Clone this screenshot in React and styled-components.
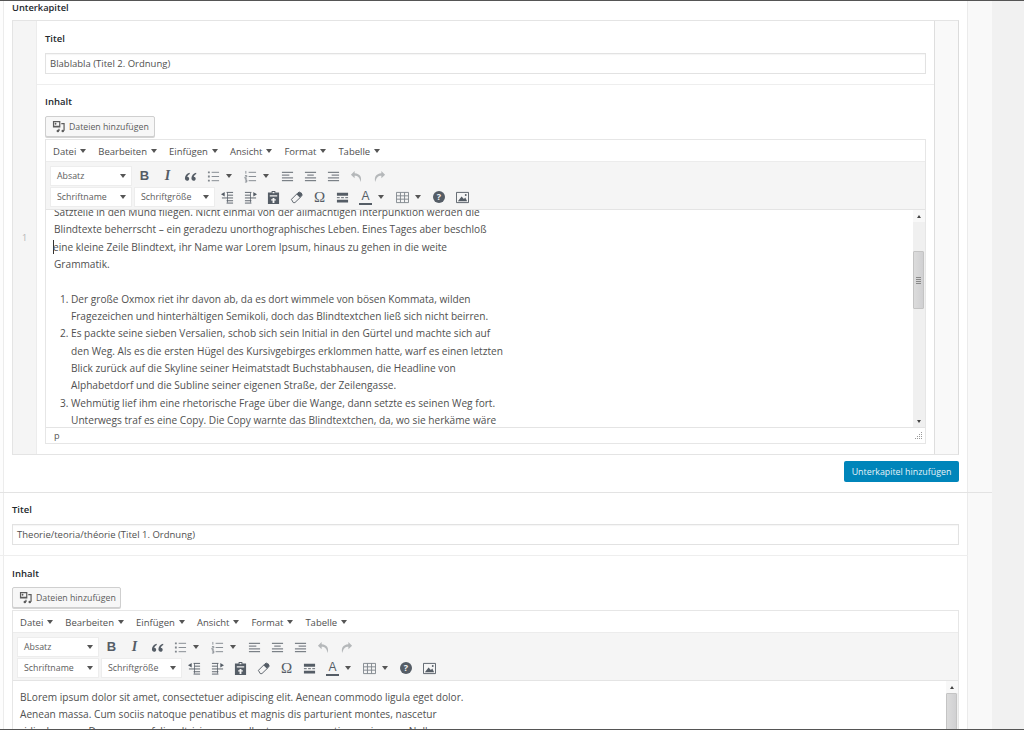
import styled, { createGlobalStyle } from "styled-components";

const GlobalStyle = createGlobalStyle`
  html, body {
    margin: 0;
    padding: 0;
    background: #f1f1f1;
    overflow: hidden;
  }
  body {
    font-family: "Open Sans", "Liberation Sans", sans-serif;
    color: #444;
  }
  * {
    box-sizing: border-box;
  }
`;

const Page = styled.div`
  height: 730px;
  overflow: hidden;
  border-top: 1px solid #555;
  border-bottom: 1px solid #555;
`;

const Sheet = styled.div`
  width: 992px;
  min-height: 730px;
  background: linear-gradient(
    to right,
    #fdfdfd 3px,
    #ececec 3px,
    #ececec 4px,
    #fff 4px,
    #fff 967px,
    #ebebeb 967px,
    #ebebeb 968px,
    #f9f9f9 968px
  );
`;

const Heading = styled.div`
  height: 19px;
  padding-left: 12px;
  font-size: 9.3px;
  line-height: 13px;
  font-weight: 600;
  color: #23282d;
`;

const RepeaterSection = styled.section`
  padding: 0 33px 10px 12px;
  border-bottom: 1px solid #e3e3e3;
`;

const RepeaterTable = styled.div`
  display: flex;
  height: 435px;
  border: 1px solid #e4e4e4;
  border-right-color: #dcdcdc;
`;

const RowHandle = styled.div`
  width: 24px;
  display: flex;
  align-items: center;
  justify-content: center;
  background: #f5f5f5;
  border-right: 1px solid #ececec;
  font-size: 9px;
  color: #b4b4b4;
`;

const RowBody = styled.div`
  flex: 1;
  min-width: 0;
`;

const RowActions = styled.div`
  width: 24px;
  background: #f9f9f9;
  border-left: 1px solid #dedede;
`;

const Field = styled.div`
  padding: ${(p) => p.$top}px ${(p) => p.$right}px 10px ${(p) => p.$left}px;
  border-bottom: ${(p) => (p.$line ? "1px solid #eeeeee" : "none")};
  margin-right: ${(p) => p.$outer || 0}px;
`;

const Label = styled.div`
  font-size: 9.5px;
  line-height: 14px;
  font-weight: 600;
  color: #23282d;
  margin-bottom: 7px;
`;

const TextInput = styled.div`
  height: 21px;
  padding-left: 4px;
  border: 1px solid #e2e2e2;
  box-shadow: inset 0 1px 1px rgba(0, 0, 0, 0.04);
  font-size: 9.5px;
  line-height: 19px;
  color: #505050;
  white-space: nowrap;
`;

const MediaButton = styled.div`
  width: ${(p) => p.$width}px;
  height: 21px;
  display: flex;
  align-items: center;
  gap: 4px;
  padding-left: 6px;
  margin-bottom: 2px;
  margin-top: ${(p) => (p.$lift ? -1 : 0)}px;
  background: #f7f7f7;
  border: 1px solid #cfcfcf;
  border-radius: 2px;
  box-shadow: 0 1px 0 #d4d4d4;
  font-size: 8.75px;
  color: #5c5c5c;
  white-space: nowrap;
  svg {
    flex: none;
  }
`;

const EditorBox = styled.div`
  border: 1px solid #e6e6e6;
  background: #fff;
`;

const MenuBar = styled.div`
  height: 21px;
  display: flex;
  align-items: center;
  gap: 12px;
  padding: 1px 0 0 7px;
  background: #fff;
`;

const MenuItem = styled.div`
  display: flex;
  align-items: center;
  gap: 4px;
  font-size: 9.5px;
  color: #505050;
`;

const Caret = styled.span`
  display: inline-block;
  flex: none;
  width: 0;
  height: 0;
  border-left: 3px solid transparent;
  border-right: 3px solid transparent;
  border-top: 4px solid #555;
`;

const Toolbar = styled.div`
  display: flex;
  flex-direction: column;
  gap: 3px;
  padding: 5px 0 4px 5px;
  background: #f5f5f5;
  border-top: 1px solid #ececec;
  border-bottom: 1px solid #e4e4e4;
  height: 49px;
`;

const ToolRow = styled.div`
  display: flex;
  align-items: center;
  height: 18px;
`;

const SelectBox = styled.div`
  width: ${(p) => p.$width}px;
  height: 18px;
  display: flex;
  align-items: center;
  justify-content: space-between;
  padding: 0 5px 0 6px;
  margin-right: ${(p) => p.$gap || 0}px;
  background: #fff;
  box-shadow: 0 0 0 1px #ededed;
  font-size: 8.8px;
  color: #5c5c5c;
`;

const ToolButton = styled.div`
  width: ${(p) => (p.$split ? 37 : 23)}px;
  height: 18px;
  display: flex;
  align-items: center;
  padding-left: 5px;
  gap: 6px;
  color: ${(p) => p.$tone};
  svg {
    flex: none;
  }
`;

const Letter = styled.span`
  width: 13px;
  text-align: center;
  font-family: ${(p) => (p.$serif ? '"Liberation Serif"' : '"Liberation Sans"')}, serif;
  font-size: ${(p) => p.$size || 13}px;
  line-height: 14px;
  font-weight: ${(p) => (p.$bold ? 700 : 400)};
  font-style: ${(p) => (p.$italic ? "italic" : "normal")};
  border-bottom: ${(p) => (p.$under ? "2px solid #555d66" : "none")};
`;

const HelpDot = styled.span`
  width: 12px;
  height: 12px;
  border-radius: 50%;
  background: #555d66;
  color: #f5f5f5;
  font-size: 9px;
  font-weight: 700;
  line-height: 12px;
  text-align: center;
`;

const EditArea = styled.div`
  display: flex;
  height: ${(p) => p.$height}px;
  overflow: hidden;
`;

const ContentText = styled.div`
  flex: 1;
  min-width: 0;
  overflow: hidden;
  padding-left: ${(p) => p.$left}px;
  padding-top: ${(p) => p.$top || 0}px;
  font-size: 10.13px;
  line-height: 17.35px;
  color: #505050;
  white-space: nowrap;
`;

const Para = styled.p`
  margin: ${(p) => p.$top || 0}px 0 17.35px;
`;

const List = styled.ol`
  margin: 0;
  padding-left: 17px;
`;

const TextCaret = styled.span`
  display: inline-block;
  width: 1px;
  height: 14px;
  margin-right: -1px;
  margin-left: -1px;
  vertical-align: -3px;
  background: #333;
`;

const ScrollTrack = styled.div`
  width: ${(p) => p.$width}px;
  display: flex;
  flex-direction: column;
  background: #f0f0f0;
`;

const ScrollArrow = styled.div`
  height: ${(p) => p.$height}px;
  display: flex;
  align-items: center;
  justify-content: center;
  flex: none;
  background: ${(p) => (p.$plain ? "#f0f0f0" : "#f8f8f8")};
`;

const ArrowGlyph = styled.span`
  width: 0;
  height: 0;
  border-left: 2.5px solid transparent;
  border-right: 2.5px solid transparent;
  border-${(p) => (p.$down ? "top" : "bottom")}: 3px solid #444;
`;

const ScrollThumb = styled.div`
  height: ${(p) => p.$height}px;
  margin-top: ${(p) => p.$top}px;
  margin-right: ${(p) => p.$right}px;
  flex: none;
  display: flex;
  flex-direction: column;
  align-items: center;
  justify-content: center;
  gap: 1px;
  background: linear-gradient(to right, #dcdcdc, #d0d0d2);
  border: 1px solid #c4c4c4;
  border-radius: 1px;
`;

const Grip = styled.i`
  width: 5px;
  height: 1px;
  background: #888;
`;

const ScrollGap = styled.div`
  flex: 1;
`;

const StatusBar = styled.div`
  height: 16px;
  display: flex;
  align-items: center;
  justify-content: space-between;
  padding: 0 2px 0 8px;
  border-top: 1px solid #e4e4e4;
  font-size: 9.2px;
  color: #555;
`;

const ButtonRow = styled.div`
  display: flex;
  justify-content: flex-end;
  margin-top: 6px;
`;

const PrimaryButton = styled.div`
  width: 115px;
  height: 21px;
  display: flex;
  align-items: center;
  justify-content: center;
  background: #0085ba;
  border-radius: 2px;
  font-size: 8.85px;
  color: #e6f3f8;
  white-space: nowrap;
`;

const TONE = "#555d66";
const SOFT = "#80868c";
const MUTED = "#b5b8ba";

const Icon = ({ children, w = 13, h = 13 }) => (
  <svg width={w} height={h} viewBox="0 0 14 14" fill="none" stroke="currentColor" strokeWidth="1">
    {children}
  </svg>
);

const lines = (rows) => rows.map(([x1, x2, y], i) => <path key={i} d={`M${x1} ${y}H${x2}`} />);

const icons = {
  quote: (
    <path
      fill="currentColor"
      stroke="none"
      d="M6 3C3 4 1 6 1 9c0 1.500 1 2.500 2.300 2.500S5.600 10.500 5.600 9.300 4.700 7.200 3.500 7.200C3.800 6 4.800 5 6.300 4.300zM13 3c-3 1-5 3-5 6 0 1.500 1 2.500 2.300 2.500s2.300-1 2.300-2.200-.9-2.100-2.100-2.100c.3-1.200 1.300-2.200 2.800-2.900z"
    />
  ),
  bullets: (
    <>
      {lines([[5, 13, 2.5], [5, 13, 7], [5, 13, 11.5]])}
      <path fill="currentColor" stroke="none" d="M1 1.500h2v2H1zM1 6h2v2H1zM1 10.500h2v2H1z" />
    </>
  ),
  numbers: (
    <>
      {lines([[5, 13, 2.5], [5, 13, 7], [5, 13, 11.5]])}
      <path strokeWidth=".9" d="M2 1v3M1 6h2v1.500H1V9h2M1 10.500h2V13H1M1.500 11.700H3" />
    </>
  ),
  left: lines([[1, 13, 2.5], [1, 9, 5.5], [1, 13, 8.5], [1, 13, 11.5]]),
  center: lines([[1, 13, 2.5], [3.500, 10.500, 5.5], [1, 13, 8.5], [1, 13, 11.5]]),
  right: lines([[1, 13, 2.5], [5, 13, 5.5], [1, 13, 8.5], [1, 13, 11.5]]),
  undo: <path fill="currentColor" stroke="none" d="M5 1 1 5l4 4V6.300c3.500 0 5.500 2 6.500 6.700 1.500-5-.5-9-6.500-9.500z" />,
  redo: <path fill="currentColor" stroke="none" d="M9 1l4 4-4 4V6.300C5.500 6.300 3.500 8.300 2.500 13 1 8 3 4 9 3.500z" />,
  outdent: (
    <>
      {lines([[6, 13, 1.5], [7, 13, 4.5], [1, 13, 7.500], [6, 13, 10.500], [6, 13, 13]])}
      <path fill="currentColor" stroke="none" d="M0 3.500 4 1v5z" />
      <path d="M7 1.500v11" strokeWidth=".8" />
    </>
  ),
  indent: (
    <>
      {lines([[1, 8, 1.5], [1, 7, 4.5], [1, 13, 7.500], [1, 8, 10.500], [1, 8, 13]])}
      <path fill="currentColor" stroke="none" d="M14 3.500 10 1v5z" />
      <path d="M7 1.500v11" strokeWidth=".8" />
    </>
  ),
  paste: (
    <path
      fill="currentColor"
      stroke="none"
      fillRule="evenodd"
      d="M5 0h4v1.500h4V14H1V1.500h4zM6 1v1.500H8V1zM3 4.500v1.500h8V4.500zM6 7.500V9H4.500v1.200H6V13h2v-2.800h1.500V9H8V7.500z"
    />
  ),
  eraser: (
    <>
      <path d="M1.500 9 8.500 2a2 2 0 0 1 3 0l.8.8a2 2 0 0 1 0 3L5.300 12.500H3.500z" />
      <path fill="currentColor" stroke="none" d="M7 3.500 9.500 1.600c1-.6 2-.4 2.800.4s1 2 .3 3L10.500 7z" />
    </>
  ),
  rule: (
    <>
      <path fill="currentColor" stroke="none" d="M1 2h12v3H1zM1 9.500h12v3H1z" />
      <path strokeDasharray="3 1.500" d="M1 7.200h12" />
    </>
  ),
  table: <path d="M.5 1.500h13v11H.5zM.5 5.200h13M.5 8.800h13M4.800 1.500v11M9.200 1.500v11" />,
  image: (
    <>
      <path d="M.5 1.500h13v11H.5z" />
      <path fill="currentColor" stroke="none" d="M2 11 6 6l2.500 2.500L10 7l2 4z" />
      <circle cx="10.500" cy="4.300" r="1" fill="currentColor" stroke="none" />
    </>
  ),
  media: (
    <>
      <path fill="currentColor" stroke="none" fillRule="evenodd" d="M1 1h8v7H1zM2.300 2.300v4h5.400v-4z" />
      <circle cx="3.800" cy="4" r="1" fill="currentColor" stroke="none" />
      <path strokeWidth="1.300" d="M10 4h3v7.500" />
      <circle cx="11.600" cy="11.800" r="1.400" fill="currentColor" stroke="none" />
      <circle cx="6.300" cy="11.800" r="1.400" fill="currentColor" stroke="none" />
      <path strokeWidth="1.300" d="M7.500 11.800V9.500" />
    </>
  ),
};

const menus = ["Datei", "Bearbeiten", "Einfügen", "Ansicht", "Format", "Tabelle"];

const Tool = ({ name, split, tone = TONE }) => (
  <ToolButton $split={split} $tone={tone}>
    <Icon>{icons[name]}</Icon>
    {split && <Caret />}
  </ToolButton>
);

const Select = ({ label, width, gap }) => (
  <SelectBox $width={width} $gap={gap}>
    {label}
    <Caret />
  </SelectBox>
);

const Editor = ({ height, children, status }) => (
  <EditorBox>
    <MenuBar>
      {menus.map((m) => (
        <MenuItem key={m}>
          {m}
          <Caret />
        </MenuItem>
      ))}
    </MenuBar>
    <Toolbar>
      <ToolRow>
        <Select label="Absatz" width={80} gap={2} />
        <ToolButton $tone={TONE}>
          <Letter $bold>B</Letter>
        </ToolButton>
        <ToolButton $tone={TONE}>
          <Letter $serif $bold $italic $size={14}>I</Letter>
        </ToolButton>
        <Tool name="quote" />
        <Tool name="bullets" split tone={SOFT} />
        <Tool name="numbers" split tone={SOFT} />
        <Tool name="left" />
        <Tool name="center" />
        <Tool name="right" />
        <Tool name="undo" tone={MUTED} />
        <Tool name="redo" tone={MUTED} />
      </ToolRow>
      <ToolRow>
        <Select label="Schriftname" width={80} gap={4} />
        <Select label="Schriftgröße" width={79} gap={2} />
        <Tool name="outdent" />
        <Tool name="indent" />
        <Tool name="paste" />
        <Tool name="eraser" />
        <ToolButton $tone={TONE}>
          <Letter $serif $size={15}>Ω</Letter>
        </ToolButton>
        <Tool name="rule" />
        <ToolButton $split $tone={TONE}>
          <Letter $under $size={12}>A</Letter>
          <Caret />
        </ToolButton>
        <Tool name="table" split tone={SOFT} />
        <ToolButton $tone={TONE}>
          <HelpDot>?</HelpDot>
        </ToolButton>
        <Tool name="image" />
      </ToolRow>
    </Toolbar>
    <EditArea $height={height}>{children}</EditArea>
    {status && (
      <StatusBar>
        p
        <svg width="8" height="8" viewBox="0 0 8 8" fill="#999">
          <path d="M6 0h1v1H6zM4 2h1v1H4zM6 2h1v1H6zM2 4h1v1H2zM4 4h1v1H4zM6 4h1v1H6zM0 6h1v1H0zM2 6h1v1H2zM4 6h1v1H4zM6 6h1v1H6z" />
        </svg>
      </StatusBar>
    )}
  </EditorBox>
);

const App = () => (
  <Page>
    <GlobalStyle />
    <Sheet>
      <Heading>Unterkapitel</Heading>
      <RepeaterSection>
        <RepeaterTable>
          <RowHandle>1</RowHandle>
          <RowBody>
            <Field $top={11} $left={8} $right={8} $line>
              <Label>Titel</Label>
              <TextInput>Blablabla (Titel 2. Ordnung)</TextInput>
            </Field>
            <Field $top={10} $left={8} $right={8}>
              <Label>Inhalt</Label>
              <MediaButton $width={110}>
                <Icon>{icons.media}</Icon>
                Dateien hinzufügen
              </MediaButton>
              <Editor height={217} status>
                <ContentText $left={8}>
                  <Para $top={-6}>
                    Satzteile in den Mund fliegen. Nicht einmal von der allmächtigen Interpunktion werden die
                    <br />
                    Blindtexte beherrscht – ein geradezu unorthographisches Leben. Eines Tages aber beschloß
                    <br />
                    <TextCaret />
                    eine kleine Zeile Blindtext, ihr Name war Lorem Ipsum, hinaus zu gehen in die weite
                    <br />
                    Grammatik.
                  </Para>
                  <List>
                    <li>
                      Der große Oxmox riet ihr davon ab, da es dort wimmele von bösen Kommata, wilden
                      <br />
                      Fragezeichen und hinterhältigen Semikoli, doch das Blindtextchen ließ sich nicht beirren.
                    </li>
                    <li>
                      Es packte seine sieben Versalien, schob sich sein Initial in den Gürtel und machte sich auf
                      <br />
                      den Weg. Als es die ersten Hügel des Kursivgebirges erklommen hatte, warf es einen letzten
                      <br />
                      Blick zurück auf die Skyline seiner Heimatstadt Buchstabhausen, die Headline von
                      <br />
                      Alphabetdorf und die Subline seiner eigenen Straße, der Zeilengasse.
                    </li>
                    <li>
                      Wehmütig lief ihm eine rhetorische Frage über die Wange, dann setzte es seinen Weg fort.
                      <br />
                      Unterwegs traf es eine Copy. Die Copy warnte das Blindtextchen, da, wo sie herkäme wäre
                    </li>
                  </List>
                </ContentText>
                <ScrollTrack $width={12}>
                  <ScrollArrow $height={12}>
                    <ArrowGlyph />
                  </ScrollArrow>
                  <ScrollThumb $height={58} $top={29} $right={1}>
                    <Grip />
                    <Grip />
                    <Grip />
                    <Grip />
                  </ScrollThumb>
                  <ScrollGap />
                  <ScrollArrow $height={12} $plain>
                    <ArrowGlyph $down />
                  </ScrollArrow>
                </ScrollTrack>
              </Editor>
            </Field>
          </RowBody>
          <RowActions />
        </RepeaterTable>
        <ButtonRow>
          <PrimaryButton>Unterkapitel hinzufügen</PrimaryButton>
        </ButtonRow>
      </RepeaterSection>
      <Field $top={10} $left={12} $right={9} $outer={24} $line>
        <Label>Titel</Label>
        <TextInput>Theorie/teoria/théorie (Titel 1. Ordnung)</TextInput>
      </Field>
      <Field $top={11} $left={12} $right={9} $outer={24}>
        <Label>Inhalt</Label>
        <MediaButton $width={109} $lift>
          <Icon>{icons.media}</Icon>
          Dateien hinzufügen
        </MediaButton>
        <Editor height={60}>
          <ContentText $left={7} $top={7.5}>
            BLorem ipsum dolor sit amet, consectetuer adipiscing elit. Aenean commodo ligula eget dolor.
            <br />
            Aenean massa. Cum sociis natoque penatibus et magnis dis parturient montes, nascetur
            <br />
            ridiculus mus. Donec quam felis, ultricies nec, pellentesque eu, pretium quis, sem. Nulla
          </ContentText>
          <ScrollTrack $width={12}>
            <ScrollArrow $height={12}>
              <ArrowGlyph />
            </ScrollArrow>
            <ScrollThumb $height={48} $top={0} $right={1} />
          </ScrollTrack>
        </Editor>
      </Field>
    </Sheet>
  </Page>
);

export default App;
